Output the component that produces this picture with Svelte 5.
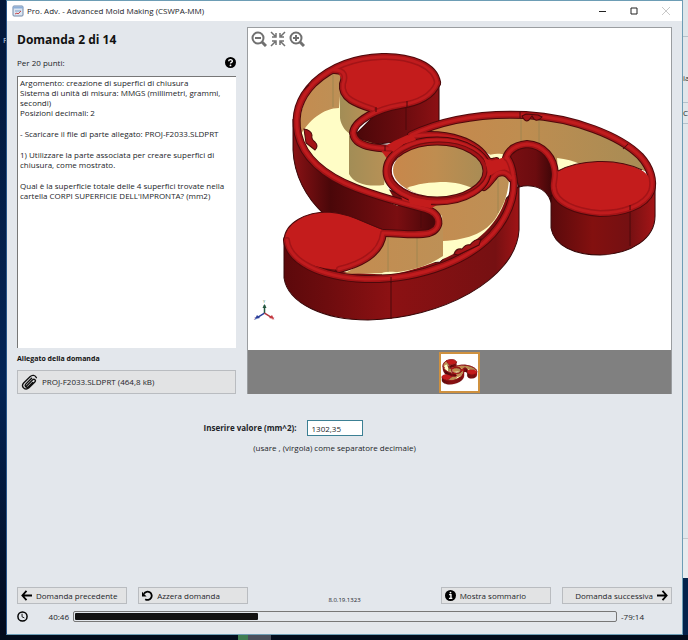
<script>
  let answer = $state('1302,35');

  const total = 7200;
  const elapsed = 40 * 60 + 46;
</script>

{#snippet rims()}
  <path d="M437 83 C435 66 410 56 382 57 C350 58 328 70 314 83 C299 98 294 116 298 134 C304 160 328 177 356 188 C382 198 406 204 426 209 C442 214 442 229 429 233 C416 236 400 233 384 233" />
  <path d="M334 70 C345 70 346 76 343 84 C341 99 358 104 373 109" />
  <path d="M437 83 C431 98 415 103 400 105 C376 109 354 121 353 133 C355 147 374 148 394 149" />
  <path d="M411 135 C440 121 480 113 526 115 C575 118 620 136 640 156 C651 168 654 181 651 191 C645 206 622 213 600 213 C576 211 555 203 554 188" />
  <path d="M506 158 C509 149 516 145 527 144 C544 145 554 158 555 174 C555 180 553 184 554 188" />
  <path d="M383 233 C381 252 363 263 339 269" />
  <path d="M287 240 C289 260 318 277 365 279 C420 280 475 260 499 226 C511 209 516 190 513 175 C512 168 510 162 507 158" />
  <path d="M484 187 C491 182 494 174 498 173 C503 171 508 173 511 178" />
  <path d="M414 136 C450 132 477 142 487 160 C490 163 492 162 496 161" />
{/snippet}

{#snippet part()}
  <!-- side walls -->
  <path class="wall-a" d="M293 120 V150 C294 175 306 198 324 214 L384 236 L432 233 L442 222 L430 205 L340 172 Z" />
  <path class="wall-dark" d="M439 82 V122 L412 140 L370 145 L355 135 L378 112 L420 100 Z" />
  <path class="wall-b" d="M506 150 L519 187 C530 184 546 186 551 202 L560 170 L545 148 L526 144 Z" />
  <path class="wall-c" d="M551 196 V228 C554 246 575 255 600 255 C632 254 655 238 655 216 V184 Z" />
  <path class="wall-d" d="M284 240 V278 C288 304 325 320 368 320 C440 319 516 280 519 230 V186 L440 262 L340 270 Z" />
  <path class="edge" d="M391 281 V319 M630 208 V246 M406 106 V130 M421 208 V228" />

  <!-- left pocket -->
  <path class="floor" d="M336 67 C312 80 298 104 298 134 C304 160 328 177 398 206 L386 184 L384 150 L354 140 L352 126 L374 108 L345 95 Z" />
  <path class="tan-l" d="M336 67 C312 80 298 104 299 138 C308 120 324 108 339 108 L342 72 Z" />
  <path class="tan-m" d="M340 74 V118 C341 126 346 132 352 135 L358 120 L374 108 L345 97 Z" />
  <path class="tan-m" d="M349 136 V174 C354 184 368 187 384 185 L386 168 L396 150 Z" />
  <path class="thin" d="M333 74 V107" />

  <!-- right pocket -->
  <path class="tan-r" d="M414 138 C445 122 490 114 530 115 C575 118 620 136 641 157 L647 172 C620 160 580 160 558 170 C552 155 540 143 526 143 C512 145 510 156 498 160 C480 146 450 138 414 138 Z" />
  <path class="floor" d="M485 157 C492 153 500 153 505 155 L504 164 L490 164 Z M557 158 C566 159 574 161 580 164 L558 172 Z" />
  <path class="thin" d="M521 116 V142 M539 117 V146" />

  <!-- lower pocket -->
  <path class="floor" d="M428 206 L488 182 L499 174 L509 180 C506 225 470 258 390 275 L342 272 C368 262 380 248 383 235 L430 235 L442 222 Z" />
  <path class="tan-l" d="M430 206 L488 182 L499 173 L509 178 C508 194 504 204 499 212 C490 232 468 240 443 241 L442 216 Z" />
  <path class="tan-l" d="M383 234 H432 L443 222 V256 C428 266 410 272 386 273 L343 274 C364 264 380 252 383 234 Z" />
  <path class="floor" d="M382 273 C388 271 396 272 399 273 L390 276 L382 277 Z" />
  <path class="thin" d="M388 237 V272 M417 237 V267 M498 178 V213" />

  <g class="rim-line">{@render rims()}</g>

  <!-- flat top faces -->
  <path class="top" d="M336 68 C350 60 366 57 382 57 C412 58 437 68 437 84 C430 98 410 103 396 106 L374 109 C356 104 342 96 343 82 Z" />
  <path class="top" d="M284 240 C285 222 307 212 328 212 C350 213 366 224 383 230 C381 252 363 263 340 270 C310 268 288 258 284 240 Z" />
  <path class="top" d="M556 172 C576 160 616 157 641 170 C648 174 653 180 651 190 C648 205 625 213 600 213 C574 211 555 204 554 190 Z" />
  <path class="top" d="M380 149 L394 141 L412 133 L424 140 L388 160 Z M400 194 L436 199 L437 205 L430 209 L404 204 Z M482 154 L492 162 L507 156 L513 175 L498 172 L487 182 Z" />
  <path class="edge" d="M284 240 C285 222 307 212 328 212 C350 213 366 224 382 229 M558 171 C578 160 616 157 642 170" />

  <g class="rim">{@render rims()}</g>
  <g class="rim-shine">{@render rims()}</g>

  <!-- hub -->
  <ellipse class="tan-h" cx="440" cy="170" rx="47" ry="27" />
  <path class="floor" d="M407 188 C416 184 430 182 446 182 C460 183 468 186 474 189 C462 197 448 198 434 197 C422 196 414 193 407 188 Z" />
  <ellipse class="hub outer" cx="437" cy="171" rx="50" ry="30" />
  <ellipse class="hub body" cx="437" cy="171" rx="50" ry="30" />
  <ellipse class="hub shine" cx="437" cy="171" rx="51" ry="31" />
  <ellipse class="hub inner" cx="439" cy="170" rx="48" ry="28" />
  <path class="top" d="M388 146 L396 141 L412 134 L416 140 L404 144 L393 152 Z M408 197 L432 201 L430 208 L410 204 Z M484 158 L492 161 L503 158 L508 168 L498 171 L489 176 Z" />

  <!-- small bosses on the rims -->
  <path class="boss" d="M304 129 Q311 130 312 135 Q311 139 315 142 Q319 146 315 150 L306 143 Z" />
  <path class="boss" d="M522 116 Q525 123 529 120 L532 116 Q536 124 542 117 L538 115 L526 114 Z" />
  <path class="boss" d="M454 254 Q456 248 462 249 Q466 244 470 245 Q474 239 481 239 L479 245 L458 255 Z" />
  <path class="edge" d="M376 107 V112 M391 277 V283 M630 205 V210 M407 101 V107 M385 146 V151 M520 112 V118 M628 144 l-5 5 M309 85 l-5 5" />
{/snippet}

<div class="desktop">
  <div class="behind-left"><span>F</span></div>

  <main class="window">
    <header class="titlebar">
      <svg class="app-icon" viewBox="0 0 12 12" aria-hidden="true">
        <rect x="1" y="1" width="10" height="10" rx="1" fill="#dce6f2" stroke="#7088a8" />
        <path d="M1 2.500H11" stroke="#8fb0d8" stroke-width="2" />
        <path d="M3 6H9" stroke="#7f9fc4" />
        <path d="M3 9l2-1 1 1 3-3" stroke="#c44c50" fill="none" />
      </svg>
      <span class="title">Pro. Adv. - Advanced Mold Making (CSWPA-MM)</span>
      <button class="win-btn" aria-label="Riduci a icona"><svg viewBox="0 0 8 8"><path d="M1 4.500H8" stroke="#222" /></svg></button>
      <button class="win-btn" aria-label="Ingrandisci"><svg viewBox="0 0 8 8"><path d="M1 1H7V7H1Z" fill="none" stroke="#222" /></svg></button>
      <button class="win-btn" aria-label="Chiudi" disabled><svg viewBox="0 0 8 8"><path d="M0 0L8 8M8 0L0 8" stroke="#c9c9c9" /></svg></button>
    </header>

    <div class="content">
      <section class="question">
        <div class="info">
          <h1>Domanda 2 di 14</h1>
          <div class="points">
            <span>Per 20 punti:</span>
            <button class="help" aria-label="Aiuto">
              <svg viewBox="0 0 12 12"><circle cx="6" cy="6" r="6" /><path d="M4 4.700C4 2.300 8 2.300 8 4.600C8 6 6 5.800 6 7.200" fill="none" stroke="#fff" stroke-width="1.500" /><circle cx="6" cy="9.200" r="1" fill="#fff" /></svg>
            </button>
          </div>
          <div class="text">
            <p>Argomento: creazione di superfici di chiusura<br />Sistema di unità di misura: MMGS (millimetri, grammi, secondi)<br />Posizioni decimali: 2</p>
            <p>- Scaricare il file di parte allegato: PROJ-F2033.SLDPRT</p>
            <p>1) Utilizzare la parte associata per creare superfici di chiusura, come mostrato.</p>
            <p>Qual è la superficie totale delle 4 superfici trovate nella cartella CORPI SUPERFICIE DELL'IMPRONTA? (mm2)</p>
          </div>
          <h2>Allegato della domanda</h2>
          <button class="btn attachment">
            <svg viewBox="0 0 16 16" fill="none" stroke="#111" stroke-width="1.300" stroke-linecap="round"><path d="M5 11.500L11 5.500C12.500 4 14.500 6 13 7.500L7.500 13C4 16 -0.500 12 2.500 8.500L8.500 2.500C10.500 0.500 13.500 1 14.500 3.500M11 8L7 12C5 13.500 3 11.500 4.500 9.500L10 4" /></svg>
            PROJ-F2033.SLDPRT (464,8 kB)
          </button>
        </div>

        <div class="viewer">
          <div class="tools">
            <button aria-label="Riduci zoom"><svg viewBox="0 0 16 16"><circle cx="7" cy="7" r="5.500" /><path d="M4 7H10" /><path class="handle" d="M11 11L15 15" /></svg></button>
            <button aria-label="Adatta"><svg viewBox="0 0 16 16" class="fit"><path d="M1 1L5 5M15 1L11 5M1 15L5 11M15 15L11 11M2 6H6V2M14 6H10V2M2 10H6V14M14 10H10V14" /></svg></button>
            <button aria-label="Aumenta zoom"><svg viewBox="0 0 16 16"><circle cx="7" cy="7" r="5.500" /><path d="M4 7H10M7 4V10" /><path class="handle" d="M11 11L15 15" /></svg></button>
          </div>
          <svg class="model" viewBox="248 28 423 322" role="img" aria-label="Modello della parte">
            <defs>
              <linearGradient id="wall-a"><stop offset="0" stop-color="#8a1215" /><stop offset=".25" stop-color="#4a0709" /><stop offset=".7" stop-color="#7a0e11" /><stop offset="1" stop-color="#3c0507" /></linearGradient>
              <linearGradient id="wall-dark"><stop offset="0" stop-color="#4a0709" /><stop offset=".6" stop-color="#6d0c0f" /><stop offset="1" stop-color="#8c1114" /></linearGradient>
              <linearGradient id="wall-b"><stop offset="0" stop-color="#7c0f12" /><stop offset=".55" stop-color="#6b0c0f" /><stop offset="1" stop-color="#2c0405" /></linearGradient>
              <linearGradient id="wall-c"><stop offset="0" stop-color="#5a0a0c" /><stop offset=".4" stop-color="#83100f" /><stop offset=".75" stop-color="#741012" /><stop offset="1" stop-color="#a51517" /></linearGradient>
              <linearGradient id="wall-d"><stop offset="0" stop-color="#5c090b" /><stop offset=".18" stop-color="#6d0c0e" /><stop offset=".45" stop-color="#8c1113" /><stop offset=".9" stop-color="#761012" /><stop offset="1" stop-color="#a01416" /></linearGradient>
              <linearGradient id="tan"><stop offset="0" stop-color="#c48c50" /><stop offset="1" stop-color="#bd9056" /></linearGradient>
              <linearGradient id="olive"><stop offset="0" stop-color="#a28d56" /><stop offset="1" stop-color="#bd9256" /></linearGradient>
              <linearGradient id="tan-r"><stop offset="0" stop-color="#c8874b" /><stop offset=".45" stop-color="#bf8d50" /><stop offset="1" stop-color="#a78c55" /></linearGradient>
            </defs>
            {@render part()}
            <g class="triad">
              <path d="M264.500 313V305" stroke="#24573f" />
              <path d="M264.500 313L258 317" stroke="#2b3f9a" />
              <path d="M264.500 313L271 317" stroke="#b3343c" />
              <path d="M262.500 308L264.500 304L266.500 308Z" fill="#24573f" />
              <path d="M255 319L257 315L260 318Z" fill="#2b3f9a" />
              <path d="M274 319L272 315L269 318Z" fill="#c53a42" />
              <text x="263" y="303" fill="#4a8a62">Y</text>
              <text x="254" y="320" fill="#2b3f9a">Z</text>
              <text x="272" y="320" fill="#c53a42">X</text>
            </g>
          </svg>
          <div class="strip">
            <button class="thumb" aria-label="Immagine 1">
              <svg viewBox="275 50 390 275">{@render part()}</svg>
            </button>
          </div>
        </div>
      </section>

      <section class="answer">
        <div class="field">
          <label for="value">Inserire valore (mm^2):</label>
          <input id="value" type="text" bind:value={answer} />
        </div>
        <p>(usare , (virgola) come separatore decimale)</p>
      </section>

      <footer>
        <nav>
          <button class="btn">
            <svg viewBox="0 0 12 12"><path d="M12 6H2M6 1L1.500 6L6 11" fill="none" stroke="#000" stroke-width="2" /></svg>
            Domanda precedente
          </button>
          <button class="btn">
            <svg viewBox="0 0 12 12"><path d="M2.200 4A4.500 4.500 0 1 1 3.500 10" fill="none" stroke="#000" stroke-width="2" /><path d="M0 2V7H5Z" /></svg>
            Azzera domanda
          </button>
          <span class="version">8.0.19.1323</span>
          <button class="btn">
            <svg viewBox="0 0 12 12"><circle cx="6" cy="6" r="6" /><path d="M4.500 5H6.500V9M4.300 9.200H8" stroke="#fff" stroke-width="1.500" fill="none" /><circle cx="6" cy="2.800" r="1" fill="#fff" /></svg>
            Mostra sommario
          </button>
          <button class="btn next">
            Domanda successiva
            <svg viewBox="0 0 12 12"><path d="M0 6H10M6 1L10.500 6L6 11" fill="none" stroke="#000" stroke-width="2" /></svg>
          </button>
        </nav>
        <div class="timer">
          <svg viewBox="0 0 12 12"><circle cx="6" cy="6" r="5" fill="none" stroke="#000" stroke-width="1.600" /><path d="M5.500 3V6.300L8 7.500" fill="none" stroke="#000" /></svg>
          <span class="elapsed">40:46</span>
          <progress max={total} value={elapsed} aria-label="Tempo trascorso"></progress>
          <span class="left">-79:14</span>
        </div>
      </footer>
    </div>
  </main>

  <div class="behind-right"><span>ia</span><span class="box">C</span></div>
  <div class="taskbar"><i class="green"></i><i class="grey"></i></div>
</div>

<style>
:global(body) {
  margin: 0;
}

.desktop {
  display: grid;
  grid-template-columns: 6px minmax(0, 1fr) 5px;
  grid-template-rows: 1fr 5px;
  min-height: 100vh;
  background: #021a3c;
  font: 8px/10px "Open Sans", "Noto Sans", sans-serif;
  color: #222428;
}

button,
input {
  font: inherit;
  color: inherit;
  border-radius: 0;
}

button {
  padding: 0;
  border: 0;
  background: none;
}

svg {
  display: block;
  flex: none;
}

h1,
h2,
p {
  margin: 0;
}

.behind-left {
  background: linear-gradient(#04183a, #032455 60%, #020a1c);
  padding-top: 35px;
  padding-left: 3px;
  overflow: hidden;
  color: #ccd5e0;
}

.behind-right {
  overflow: hidden;
  background: linear-gradient(#dfe6ea 0 36px, #b5c2c9 36px 37px, #e2e6ea 37px 538px, #c4c8cc 538px 539px, #e8ebee 539px 578px, #03234c 578px);
  padding-top: 73px;
}

.behind-right span {
  display: block;
}

.behind-right .box {
  margin-top: 19px;
  padding: 5px 0;
  border-top: 1px solid #b5c2cc;
  border-bottom: 1px solid #b5c2cc;
}

.taskbar {
  grid-column: 1 / -1;
  display: flex;
  padding-left: 238px;
  background: #020c1c;
}

.taskbar .green {
  width: 10px;
  background: #3f7d52;
}

.taskbar .grey {
  width: 23px;
  background: #4a4f5c;
}

.window {
  display: flex;
  flex-direction: column;
  border: 1px solid #6d9db5;
  border-left-color: #28568a;
  background: #e3e7ec;
}

.titlebar {
  display: flex;
  align-items: center;
  height: 20px;
  padding-left: 5px;
  background: #fff;
}

.app-icon {
  width: 12px;
  height: 12px;
  margin-right: 3px;
}

.title {
  flex: 1;
}

.win-btn {
  width: 32px;
  height: 20px;
}

.win-btn svg {
  width: 8px;
  height: 8px;
  margin: auto;
}

.content {
  flex: 1;
  display: flex;
  flex-direction: column;
  padding: 6px 10px 12px;
}

.question {
  display: grid;
  grid-template-columns: minmax(0, 34fr) minmax(0, 66fr);
  gap: 11px;
}

.info {
  display: flex;
  flex-direction: column;
}

h1 {
  margin-top: 5px;
  font-size: 12px;
  line-height: 16px;
  color: #111;
}

.points {
  display: flex;
  align-items: center;
  justify-content: space-between;
  margin: 9px 0 8px;
}

.help svg {
  width: 11px;
  height: 11px;
}

.text {
  flex: 1;
  display: flex;
  flex-direction: column;
  gap: 11px;
  padding: 1px 2px;
  border-top: 1px solid #777;
  border-left: 1px solid #777;
  background: #fff;
}

h2 {
  margin: 6px 0;
  font-size: 7px;
  line-height: 10px;
  color: #111;
}

.btn {
  display: flex;
  align-items: center;
  gap: 4px;
  height: 17px;
  padding: 0 3px;
  border: 1px solid #b9bcc0;
  background: #e2e3e4;
}

.btn svg {
  width: 11px;
  height: 11px;
}

.attachment {
  height: 24px;
}

.attachment svg {
  width: 17px;
  height: 17px;
}

.viewer {
  position: relative;
  border: 1px solid #9a9da0;
  border-bottom: 0;
  background: #fff;
}

.tools {
  position: absolute;
  top: 3px;
  left: 3px;
  display: flex;
  gap: 3px;
}

.tools svg {
  width: 16px;
  height: 16px;
  fill: none;
  stroke: #707070;
  stroke-width: 2;
}

.tools .handle {
  stroke-width: 3;
}

.tools .fit {
  stroke-width: 1.500;
}

.model {
  width: 100%;
}

.strip {
  display: flex;
  justify-content: center;
  padding: 2px 0 1px;
  background: #808080;
}

.thumb {
  width: 41px;
  height: 41px;
  border: 2px solid #cf913f;
  background: #fff;
}

.thumb svg {
  width: 100%;
}

.answer .field {
  display: grid;
  grid-template-columns: 13fr 17fr;
  align-items: center;
  gap: 10px;
  margin-top: 26px;
}

.answer label {
  text-align: right;
  font-weight: bold;
}

.answer input {
  box-sizing: border-box;
  width: 56px;
  height: 16px;
  padding: 0 4px;
  border: 1px solid #3c8094;
  background: #fff;
}

.answer p {
  margin-top: 7px;
  padding-right: 20px;
  text-align: center;
}

footer {
  margin-top: auto;
}

nav {
  display: grid;
  grid-template-columns: 11fr 11fr 17fr 11fr 11fr;
  gap: 11px;
}

.next {
  justify-content: flex-end;
}

.version {
  align-self: end;
  text-align: center;
  font-size: 6px;
  line-height: 7px;
}

.timer {
  display: flex;
  align-items: center;
  gap: 4px;
  margin-top: 7px;
}

.timer svg {
  width: 11px;
  height: 11px;
}

.elapsed {
  width: 37px;
  text-align: right;
}

.left {
  width: 51px;
}

progress {
  appearance: none;
  flex: 1;
  min-width: 0;
  box-sizing: border-box;
  height: 11px;
  border: 1px solid #777;
  border-radius: 2px;
  padding: 1px;
  background: none;
}

progress::-webkit-progress-bar {
  background: none;
}

progress::-webkit-progress-value {
  background: #111;
  border-radius: 1px;
}

.wall-a { fill: url(#wall-a); }
.wall-b { fill: url(#wall-b); }
.wall-c { fill: url(#wall-c); }
.wall-d { fill: url(#wall-d); }
.wall-dark { fill: url(#wall-dark); }

.wall-a,
.wall-b,
.wall-c,
.wall-d,
.wall-dark {
  stroke: #360708;
}

.top { fill: #c41c1c; }
.floor { fill: #fffdc6; }
.tan-l { fill: url(#tan); }
.tan-m { fill: url(#olive); }
.tan-r { fill: url(#tan-r); }
.tan-h { fill: url(#tan-r); }

.edge,
.thin {
  fill: none;
  stroke: #4d0a0c;
}

.thin {
  stroke: #a08650;
}

.rim-line,
.rim,
.rim-shine {
  fill: none;
  stroke: #4d090b;
  stroke-width: 8;
  stroke-linecap: round;
  stroke-linejoin: round;
}

.rim {
  stroke: #a31417;
  stroke-width: 6;
}

.rim-shine {
  stroke: #c01c1e;
  stroke-width: 3;
}

.hub {
  fill: none;
  stroke: #4d090b;
  stroke-width: 9;
}

.hub.body {
  stroke: #a31417;
  stroke-width: 7;
}

.hub.shine {
  stroke: #c01c1e;
  stroke-width: 3;
}

.hub.inner {
  stroke: #6e0d0f;
  stroke-width: 1;
}

.boss {
  fill: #a31417;
  stroke: #4d090b;
}

.triad path {
  stroke-width: 1.500;
}

.triad text {
  font-size: 4px;
}
</style>
